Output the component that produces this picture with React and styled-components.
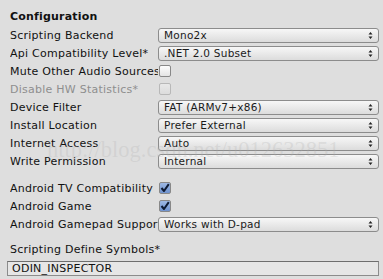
import React from "react";
import styled, { createGlobalStyle } from "styled-components";

const Global = createGlobalStyle`
  html, body { margin: 0; padding: 0; background: #dedede; }
  body { font-family: "DejaVu Sans", Verdana, sans-serif; font-size: 11px; letter-spacing: 0.25px; color: #111; }
`;

const Panel = styled.div`
  position: relative;
  width: 383px;
  height: 279px;
  box-sizing: border-box;
  padding: 8px 4px 0 10px;
  overflow: hidden;
`;

const Heading = styled.div`
  height: 18px;
  line-height: 18px;
  font-weight: bold;
  letter-spacing: 0.2px;
`;

const Row = styled.div`
  display: flex;
  align-items: center;
  height: 18px;
`;

const Label = styled.div`
  width: 148px;
  flex: none;
  white-space: nowrap;
  overflow: hidden;
  color: ${(p) => (p.$disabled ? "#8e8e8e" : "#111")};
`;

const FieldLabel = styled.div`
  height: 18px;
  line-height: 18px;
  margin-top: 8px;
  white-space: nowrap;
`;

const Popup = styled.div`
  flex: 1;
  height: 15px;
  box-sizing: border-box;
  border: 1px solid #8c8c8c;
  border-radius: 3px;
  background: linear-gradient(#f7f7f7, #dcdcdc);
  display: flex;
  align-items: center;
  padding: 0 5px;
  font-size: 10.5px;
  color: #1a1a1a;
`;

const PopupText = styled.span`
  flex: 1;
  white-space: nowrap;
  overflow: hidden;
`;

const Box = styled.div`
  width: 12px;
  height: 12px;
  box-sizing: border-box;
  margin-left: 1px;
  border: 1px solid ${(p) => (p.$disabled ? "#b8b8b8" : "#888")};
  border-radius: 2px;
  background: ${(p) =>
    p.$checked
      ? "linear-gradient(#9db8e4, #6f93cf)"
      : p.$disabled
      ? "linear-gradient(#e8e8e8, #dcdcdc)"
      : "linear-gradient(#fdfdfd, #e4e4e4)"};
  display: flex;
  align-items: center;
  justify-content: center;
`;

const Gap = styled.div`
  height: ${(p) => p.$h}px;
`;

const Field = styled.div`
  margin: 2px 0 0 -3px;
  height: 15px;
  box-sizing: border-box;
  border: 1px solid #8c8c8c;
  border-top-color: #6e6e6e;
  background: #e6e6e6;
  padding: 0 4px;
  line-height: 13px;
  color: #111;
`;

const Watermark = styled.div`
  position: absolute;
  left: 47px;
  top: 137px;
  font-family: "Liberation Serif", "Times New Roman", serif;
  font-size: 22.5px;
  letter-spacing: 0;
  color: rgba(175, 175, 175, 0.26);
  white-space: nowrap;
  pointer-events: none;
`;

const Arrows = () => (
  <svg width="5" height="9" viewBox="0 0 5 9">
    <path d="M2.5 1 L4.5 3.5 L0.5 3.5 Z M2.5 8 L4.5 5.5 L0.5 5.5 Z" fill="#222" />
  </svg>
);

const Check = () => (
  <svg width="10" height="10" viewBox="0 0 10 10">
    <path d="M1.5 5 L4 8 L8.8 1.2" stroke="#0d1a33" strokeWidth="2" fill="none" strokeLinejoin="round" />
  </svg>
);

const PopupRow = ({ label, value }) => (
  <Row>
    <Label>{label}</Label>
    <Popup>
      <PopupText>{value}</PopupText>
      <Arrows />
    </Popup>
  </Row>
);

const CheckRow = ({ label, checked, disabled }) => (
  <Row>
    <Label $disabled={disabled}>{label}</Label>
    <Box $checked={checked} $disabled={disabled}>{checked && <Check />}</Box>
  </Row>
);

export default function App() {
  return (
    <>
      <Global />
      <Panel>
        <Heading>Configuration</Heading>
        <PopupRow label="Scripting Backend" value="Mono2x" />
        <PopupRow label="Api Compatibility Level*" value=".NET 2.0 Subset" />
        <CheckRow label="Mute Other Audio Sources" />
        <CheckRow label="Disable HW Statistics*" disabled />
        <PopupRow label="Device Filter" value="FAT (ARMv7+x86)" />
        <PopupRow label="Install Location" value="Prefer External" />
        <PopupRow label="Internet Access" value="Auto" />
        <PopupRow label="Write Permission" value="Internal" />
        <Gap $h={9} />
        <CheckRow label="Android TV Compatibility" checked />
        <CheckRow label="Android Game" checked />
        <PopupRow label="Android Gamepad Support Level" value="Works with D-pad" />
        <FieldLabel>Scripting Define Symbols*</FieldLabel>
        <Field>ODIN_INSPECTOR</Field>
        <Watermark>http://blog.csdn.net/u012632851</Watermark>
      </Panel>
    </>
  );
}
